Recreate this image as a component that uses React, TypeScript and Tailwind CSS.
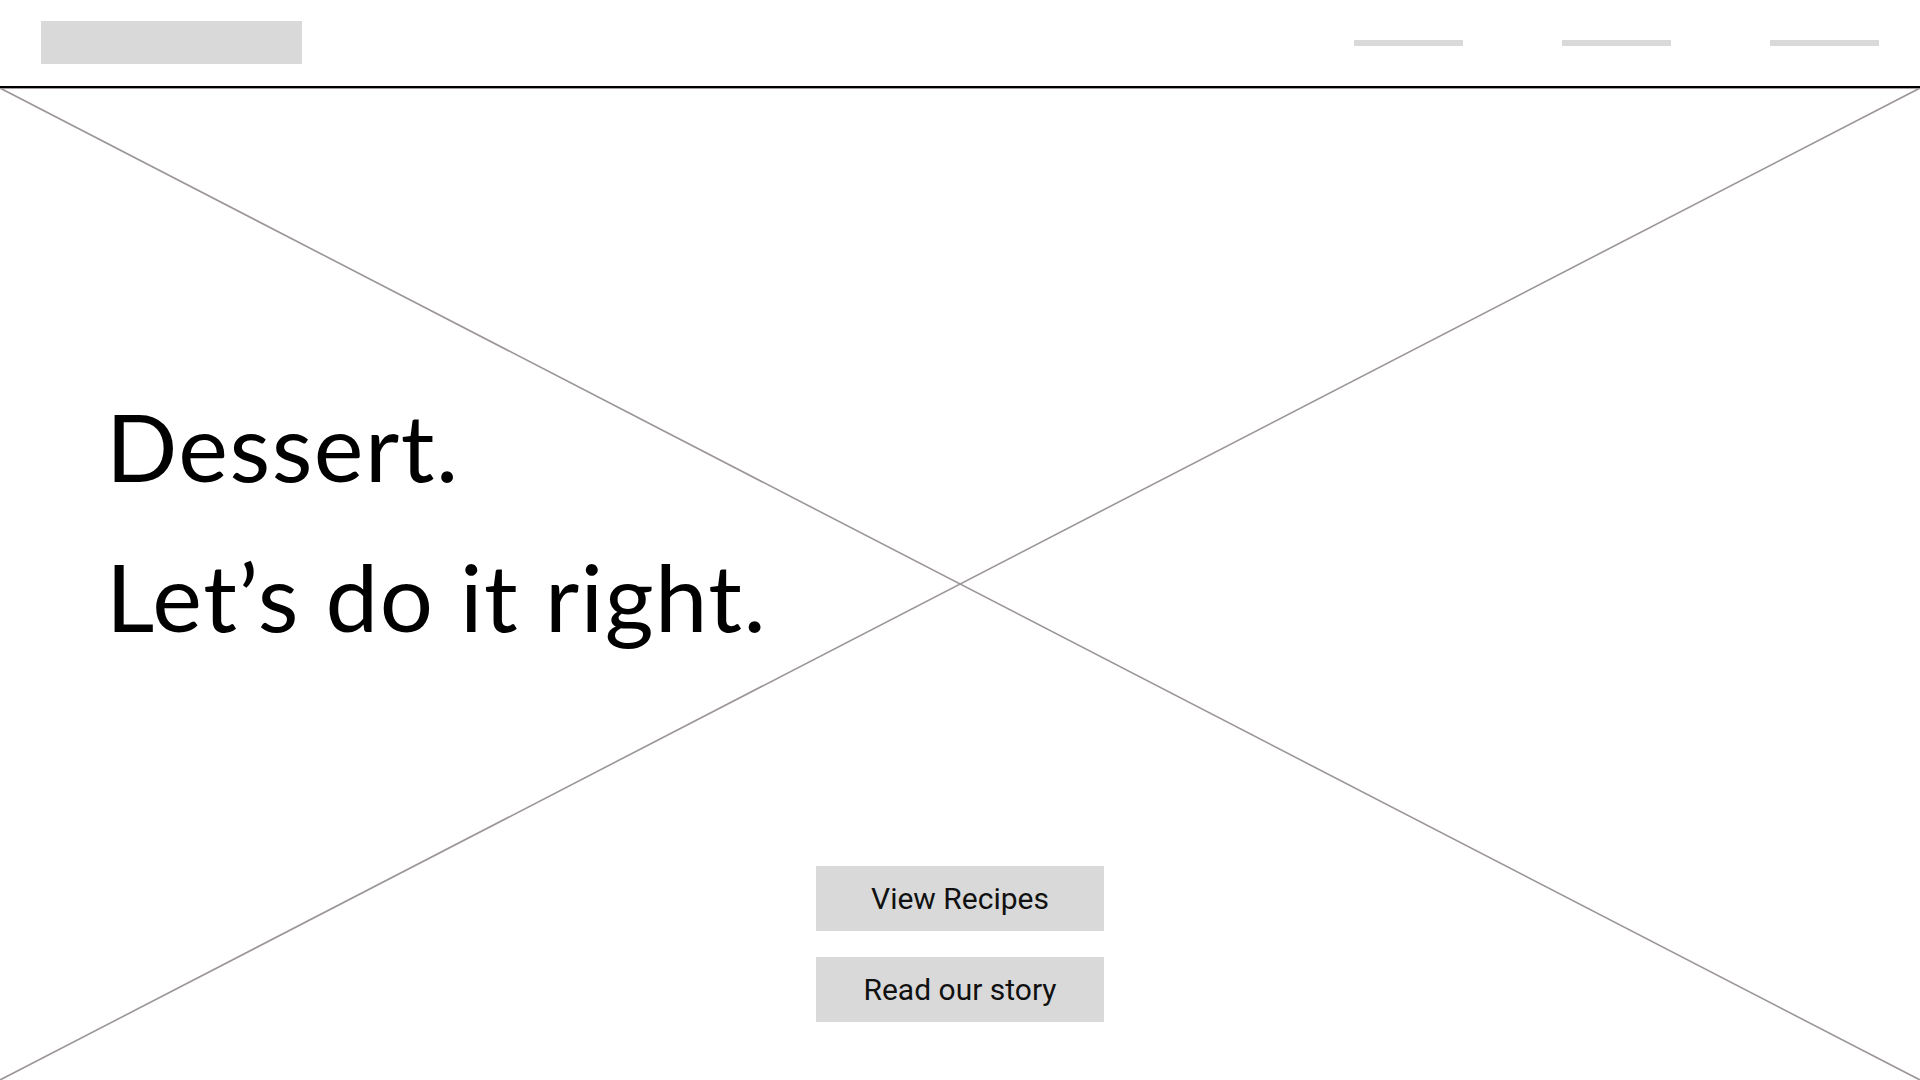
import React from "react";

const navItems = ["Recipes", "About", "Contact"];

const Header: React.FC = () => (
  <header className="flex h-[88px] items-start justify-between border-b-2 border-black px-[41px]">
    <div className="mt-[21px] h-[43px] w-[261px] bg-[#d9d9d9]" />
    <nav className="mt-[40px] flex gap-[99px]">
      {navItems.map((item) => (
        <div key={item} aria-label={item} className="h-[6px] w-[109px] bg-[#d9d9d9]" />
      ))}
    </nav>
  </header>
);

const Placeholder: React.FC = () => (
  <svg
    className="absolute inset-0 h-full w-full"
    viewBox="0 0 1920 992"
    preserveAspectRatio="none"
  >
    <line x1="0" y1="0.5" x2="1920" y2="0.5" stroke="#a39d9d" strokeWidth="1" />
    <line x1="0" y1="0" x2="1920" y2="992" stroke="#9c9696" strokeWidth="1.6" />
    <line x1="1920" y1="0" x2="0" y2="992" stroke="#9c9696" strokeWidth="1.6" />
  </svg>
);

const App: React.FC = () => {
  return (
    <div className="min-h-screen bg-white font-['Lato',sans-serif] text-black">
      <Header />
      <section className="relative h-[992px] overflow-hidden">
        <Placeholder />
        <div className="relative flex h-full flex-col">
          <h1 className="mt-[283px] pl-[106px] text-[94px] leading-[150px] font-normal tracking-[1.5px]">
            <span className="block">Dessert.</span>
            <span className="block">Let’s do it right.</span>
          </h1>
          <div className="mt-[195px] flex flex-col items-center gap-[26px] font-['Roboto',sans-serif]">
            <button className="h-[65px] w-[288px] bg-[#d9d9d9] text-[30px] text-[#111]">
              View Recipes
            </button>
            <button className="h-[65px] w-[288px] bg-[#d9d9d9] text-[30px] text-[#111]">
              Read our story
            </button>
          </div>
        </div>
      </section>
    </div>
  );
};

export default App;
